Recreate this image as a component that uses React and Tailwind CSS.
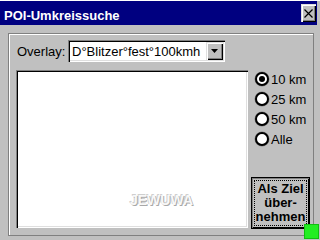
import React from "react";

// Sunken 3D edge used by combo and list fields
const sunken =
  "shadow-[inset_1px_1px_0_#808080,inset_2px_2px_0_#000,inset_-1px_-1px_0_#fff,inset_-2px_-2px_0_#dfdfdf]";
const raised =
  "shadow-[inset_1px_1px_0_#dfdfdf,inset_2px_2px_0_#fff,inset_-1px_-1px_0_#000,inset_-2px_-2px_0_#808080]";

function Radio({ label, checked }) {
  return (
    <div className="flex h-[20px] items-center pl-[4px]">
      <span className="flex h-[14px] w-[14px] items-center justify-center rounded-full border-2 border-black bg-white shadow-[0_0_0_0.5px_#808080]">
        {checked && <span className="h-[6px] w-[6px] rounded-full bg-black" />}
      </span>
      <span className="ml-[2px] text-[13px] leading-none">{label}</span>
    </div>
  );
}

export default function App() {
  const radii = ["10 km", "25 km", "50 km", "Alle"];

  return (
    <div className="relative h-[240px] w-[320px] overflow-hidden border-t border-white bg-[#c0c0c0] font-['Liberation_Sans',Arial,sans-serif] text-black">
      {/* title bar */}
      <div className="mr-[3px] flex h-[24px] items-center justify-between bg-[#000080] pl-[4px] pr-[1px]">
        <span className="mt-[5px] text-[13px] font-bold leading-none text-white">
          POI-Umkreissuche
        </span>
        <button
          className={`flex h-[18px] w-[15px] items-center justify-center bg-[#c0c0c0] ${raised}`}
        >
          <svg width="9" height="9" viewBox="0 0 9 9">
            <path d="M0.5 0.5L8.5 8.5M8.5 0.5L0.5 8.5" stroke="#000" strokeWidth="1.2" />
          </svg>
        </button>
      </div>

      {/* group panel */}
      <div className="ml-[8px] mt-[8px] flex h-[203px] w-[306px] flex-col border border-[#808080] pb-[7px] pl-[7px] pt-[6px] shadow-[inset_1px_1px_0_#fff]">
        <div className="flex h-[22px] items-center">
          <span className="w-[52px] pl-[1px] text-[13px] leading-none">Overlay:</span>
          <div className={`flex h-[22px] w-[157px] items-center bg-white ${sunken}`}>
            <span className="flex-1 pl-[4px] text-[13px] leading-none">
              D°Blitzer°fest°100kmh
            </span>
            <span
              className={`mr-[2px] flex h-[18px] w-[17px] items-center justify-center bg-[#c0c0c0] ${raised}`}
            >
              <svg width="7" height="4" viewBox="0 0 7 4">
                <path d="M0 0h7L3.5 4z" fill="#000" />
              </svg>
            </span>
          </div>
        </div>

        <div className="mt-[8px] flex flex-1">
          <div
            className={`flex h-[158px] w-[232px] flex-col justify-end bg-white pb-[21px] pl-[114px] ${sunken}`}
          >
            <span className="text-[14px] font-bold leading-none text-[#f8f8f8] [text-shadow:1px_1px_0_#a8a8a8,-1px_-1px_0_#cfcfcf]">
              JEWUWA
            </span>
          </div>

          <div className="-mt-px ml-[3px] flex w-[59px] flex-col">
            {radii.map((r, i) => (
              <Radio key={r} label={r} checked={i === 0} />
            ))}
            <button className="mt-auto mb-[-1px] flex h-[52px] w-[59px] items-center justify-center border border-black bg-[#c0c0c0] p-[2px] shadow-[inset_1px_1px_0_#808080,inset_-1px_-1px_0_#000]">
              <span className="flex h-full w-full flex-col items-center justify-center border border-dotted border-black text-[13px] font-bold leading-[14px]">
                <span>Als Ziel</span>
                <span>über-</span>
                <span>nehmen</span>
              </span>
            </button>
          </div>
        </div>
      </div>

      <div className="absolute left-[304px] top-[223px] h-[15px] w-[15px] border border-[#10c010] bg-[#22ee22]" />
    </div>
  );
}
